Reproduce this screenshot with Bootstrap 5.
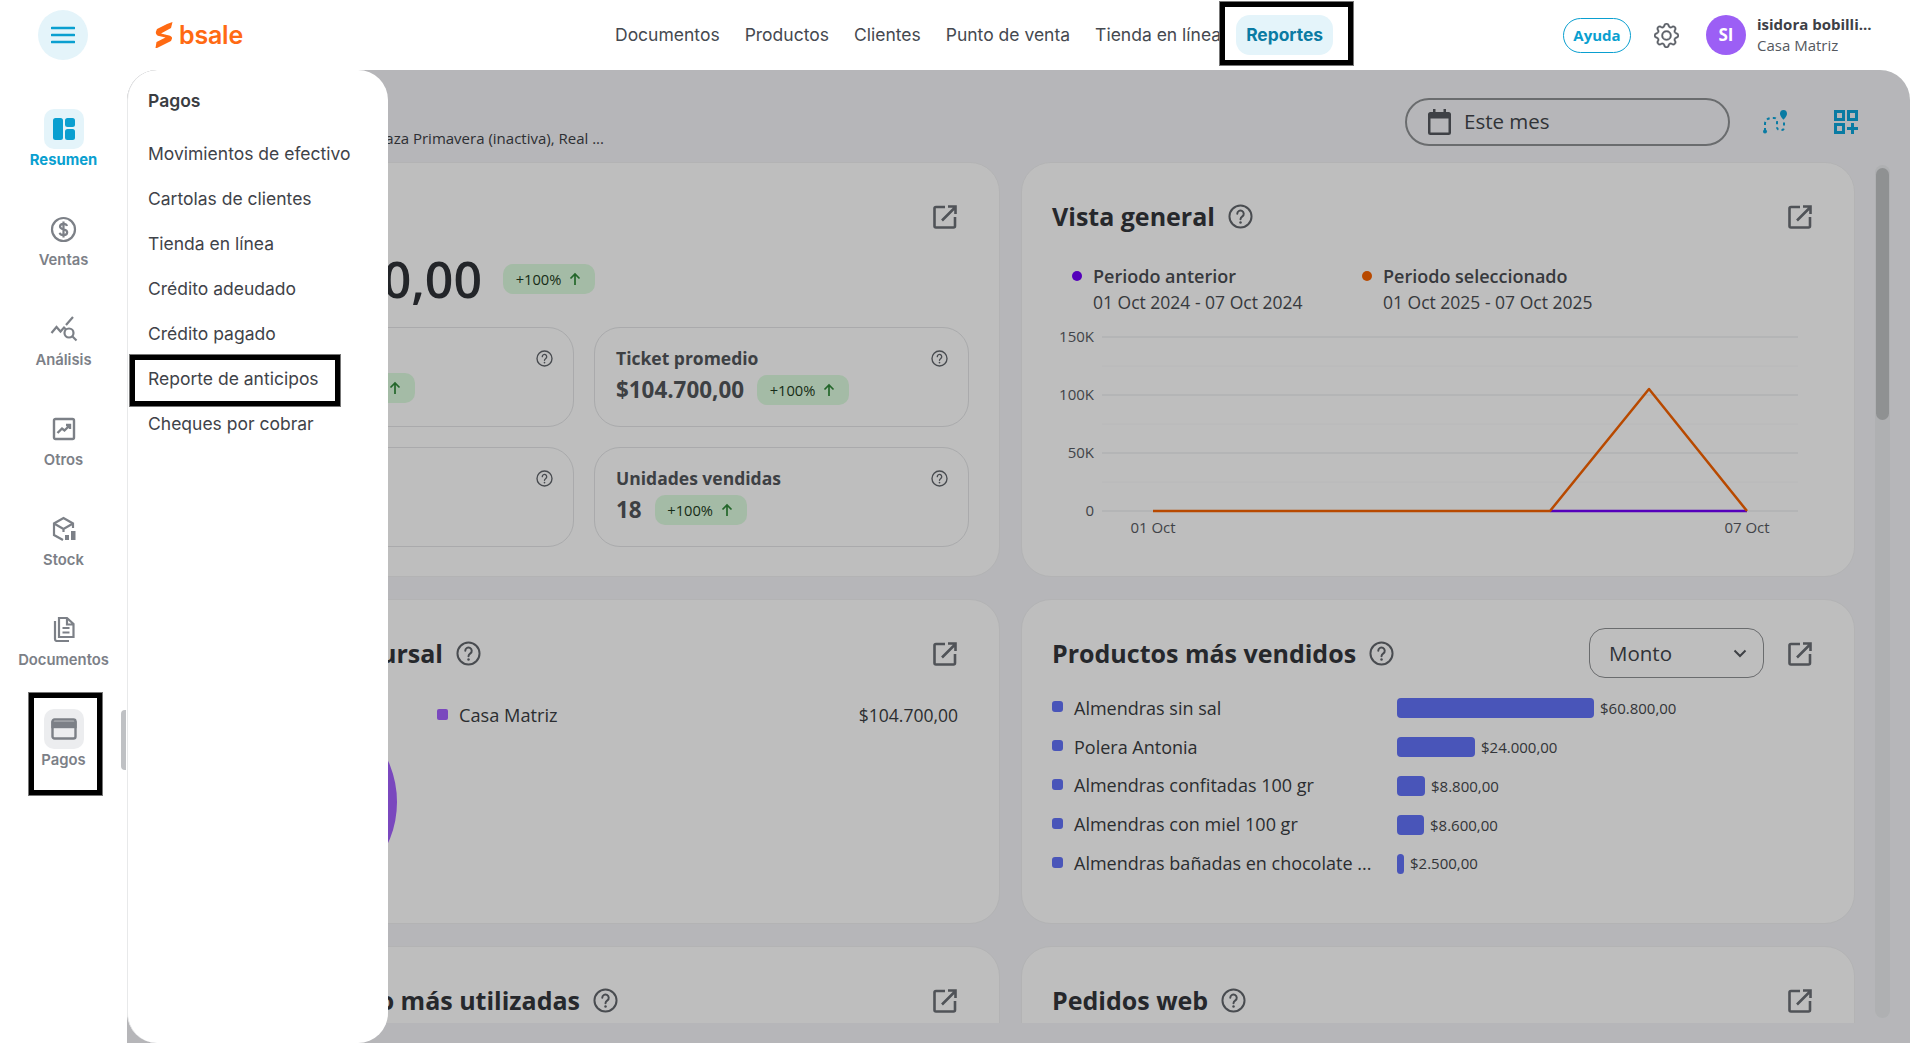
<!DOCTYPE html>
<html lang="es">
<head>
<meta charset="utf-8">
<title>Bsale - Resumen</title>
<link href="https://cdn.jsdelivr.net/npm/bootstrap@5.3.0/dist/css/bootstrap.min.css" rel="stylesheet">
<style>
html,body{height:1043px;overflow:hidden;background:#fff}
body{font-family:"Open Sans","Noto Sans",sans-serif;color:#3d4046}
.topbar{height:70px;padding:0;flex-wrap:nowrap;justify-content:flex-start}
.burger{width:50px;height:50px;margin-left:38px;border-radius:50%;background:#e4f4fa;border:0;padding:0}
.logo{margin-left:67px;width:88px;height:26px;gap:6px}
.logo svg{flex:none}
.logo-word{font-family:Inter,sans-serif;font-weight:600;font-size:25px;line-height:26px;color:#ff6a13;letter-spacing:-.2px}
.mainnav{margin-left:362px;gap:5px;font-family:Inter,sans-serif;flex-wrap:nowrap}
.mainnav .nav-link{color:#454950;font-size:17.5px;padding:0 10px;height:40px;line-height:40px;border-radius:14px;white-space:nowrap;position:relative}
.mainnav .nav-link.on{background:#e4f4fa;color:#0a7ba3;font-weight:700;font-size:17.4px}
.hl{position:absolute;border:5px solid #000;box-shadow:0 0 0 1px #777;pointer-events:none}
.hl-nav{top:-13px;bottom:-10px;left:-16px;right:-20px;border-radius:0}
.ayuda{width:68px;height:35px;border:1px solid #0a9fd0;border-radius:18px;color:#0a9fd0;font:700 15px/33px "Open Sans",sans-serif;padding:0;background:#fff}
.tools{margin-left:auto;padding-right:40px}
.gearbtn{margin-left:23px;width:25px;height:25px;color:#5b5f66;stroke:currentColor;stroke-width:.25}
.avatar{margin-left:27px;width:40px;height:40px;border-radius:50%;background:#9c5ff5;color:#fff;font-weight:700;font-size:17px}
.who{margin-left:11px;width:113px;line-height:21px}
.who b{display:block;font-size:15px;font-weight:700;color:#3d4046;white-space:nowrap}
.who span{display:block;font-size:15px;color:#54585e}
.shell{height:973px}
.sidebar{width:127px;flex:none;position:relative;padding-top:39px;font-family:Inter,sans-serif}
.sideitem{height:100px;color:#7c8087;text-align:center;font-size:14.8px;font-weight:600;line-height:20px;position:relative;text-decoration:none;display:block}
.sideicon{width:40px;height:40px;border-radius:10px;margin:0 auto 1px}
.sideitem.cur{color:#0a9fd0;font-weight:700}
.sideitem.cur .sideicon{background:#e4f4fa}
.sideitem.act .sideicon{background:#ecedef}
.hl-side{left:29px;width:73px;top:-16px;height:102px}
.grip{position:absolute;right:1px;top:640px;width:5px;height:60px;background:#bfc1c4;border-radius:4px 0 0 4px}
.stage{flex:1;position:relative;overflow:hidden;background:#f4f5f8;border-radius:30px 30px 0 0}
.head{height:92px;padding:0 52px 0 39px}
.subnote{font-size:15px;white-space:nowrap;color:#3d4046;margin-top:44px;line-height:20px;width:438px;text-align:right}
.datebox{width:325px;height:48px;margin-left:auto;margin-top:11px;border:2px solid #8f9194;border-radius:24px;padding-left:21px;font-size:20.5px;color:#42454b;gap:13px}
.headicon{color:#0da5db;width:24px;height:24px}
.route{margin-left:33px;margin-top:11px}
.gridadd{margin-left:47px;margin-top:11px}
.lower{height:861px;padding-left:39px}
.viewport{width:1689px;height:861px;overflow:hidden;flex:none}
.panelgrid{display:grid;grid-template-columns:834px 834px;column-gap:21px;row-gap:22px;grid-template-rows:415px 325px 200px}
.panel{border-radius:30px;border:1px solid #f0f0f2;background:#fff;padding:28px 30px 0;box-shadow:none}
.phead{height:50px;display:flex;align-items:center}
.ptitle{font-size:25px;font-weight:700;color:#33363b;margin:0;line-height:32px;white-space:nowrap}
.t-suc{width:246px;text-align:right}
.t-pago{width:383px;text-align:right}
.qicon{width:25px;height:25px;margin-left:13px;color:#62666c;flex:none}
.exticon{width:24px;height:24px;margin:1px 12px 0 auto;color:#6c7076;flex:none}
.bignum{height:60px;margin-top:8px;gap:21px}
.bignum strong{font-size:50px;font-weight:600;color:#2f3238;line-height:60px;white-space:nowrap;width:285px;text-align:right}
.pillup{width:92px;height:30px;border-radius:10px;background:#ddfbdf;color:#1e3b22;font-size:14.7px;gap:7px;flex:none}
.pillup svg{width:14px;height:14px;color:#2f8a39}
.kpis{display:grid;grid-template-columns:375px 375px;gap:20px;margin:18px 0 0 2px}
.kpi{height:100px;border:1px solid #e4e5e7;border-radius:26px;padding:18px 20px 0 21px}
.kpi-top{height:24px;display:flex;align-items:center}
.kpi-top span{font-size:17.5px;font-weight:700;color:#53565b}
.kpi-top svg{width:17px;height:17px;color:#62666c;margin-right:0;margin-left:auto}
.kpi-val{margin-top:3px;gap:13px}
.kpi-val strong{font-size:22.4px;font-weight:700;color:#53565b;white-space:nowrap}
.kpi-val.offset{padding-left:102px}
.legend{margin:23px 0 0 20px}
.legitem{width:290px}
.legdot{width:10px;height:10px;border-radius:50%;margin:7px 11px 0 0;flex:none}
.legname{font-size:18px;font-weight:600;line-height:24px;color:#4a4d52;white-space:nowrap}
.legdate{font-size:17.5px;line-height:24px;margin-top:2px;color:#4a4d52;white-space:nowrap}
.chart{display:block;margin:10px 0 0 -30px}
.chart text{font-family:"Open Sans",sans-serif;font-size:15px;fill:#585b62}
.sucbody{padding-top:24px}
.donutcol{width:240px;flex:none}
.sucrow{height:26px;line-height:26px;font-size:18.2px;padding-right:11px;color:#3a3d42}
.sucrow .amt{font-size:17.5px}
.sq{width:11px;height:11px;border-radius:2px;background:#a461ff;margin:0 11px 2px 0;flex:none}
.selectbox{width:175px;height:50px;margin-left:auto;border:1px solid #8f9194;border-radius:16px;padding:0 16px 0 19px;font-size:20.5px;color:#42454b;background:transparent}
.selectbox+.exticon{margin-left:24px}
.prodlist{margin-top:11px}
.prodrow{height:38.8px;display:flex;align-items:center;font-size:18px;color:#3a3d42}
.prodname{width:345px;flex:none;display:flex;align-items:center;white-space:nowrap}
.bul{width:11px;height:11px;border-radius:3px;background:#6372f8;margin:0 11px 3px 0;flex:none}
.prodbar{height:20px;border-radius:4px;background:#6372f8}
.prodval{font-size:15px;margin-left:6px;color:#45484d}
.sbar{width:15px;margin:3px 0 5px 20px;height:853px;background:#ebecef;border-radius:8px;padding:3px 1px 0;flex:none}
.sthumb{height:252px;border-radius:7px;background:#c1c3c5}
.dim{position:absolute;inset:0;background:rgba(0,0,0,.255)}
.flyout{position:absolute;left:0;top:0;bottom:0;width:261px;background:#fff;border-left:1px solid #e8e9ea;border-radius:30px;padding:16px 0 0 20px;font-family:Inter,sans-serif}
.flyout h6{font-size:17.5px;font-weight:600;color:#3a3d42;line-height:30px;margin:0 0 15px}
.flyout .list-group-item{border:0;padding:0;height:45px;line-height:45px;font-size:17.5px;color:#3f4349;background:transparent;position:relative;white-space:nowrap}
.hl-rep{left:-18px;width:210px;top:-1px;height:51px}
</style>
</head>
<body>
<svg width="0" height="0" class="position-absolute">
  <symbol id="q" viewBox="0 0 24 24"><circle cx="12" cy="12" r="10.6" fill="none" stroke="currentColor" stroke-width="1.9"/><path d="M8.9 9.4a3.1 3.1 0 1 1 4.9 2.5c-1.1.8-1.8 1.4-1.8 2.7" fill="none" stroke="currentColor" stroke-width="1.9" stroke-linecap="round"/><circle cx="12" cy="17.7" r="1.2" fill="currentColor"/></symbol>
  <symbol id="ext" viewBox="0 0 24 24"><path d="M12 2H3a1.500 1.500 0 0 0-1.500 1.500v17.500A1.500 1.500 0 0 0 3 22.500h17.500A1.500 1.500 0 0 0 22 21v-9" fill="none" stroke="currentColor" stroke-width="2.600"/><path d="M9 15.500L22 2.500M15 1.500h7.500V9" fill="none" stroke="currentColor" stroke-width="2.600"/></symbol>
  <symbol id="up" viewBox="0 0 14 14"><path d="M7 13V2M2.500 6.500L7 2l4.500 4.500" fill="none" stroke="currentColor" stroke-width="1.700"/></symbol>
</svg>

<nav class="navbar topbar bg-white d-flex align-items-center">
  <button class="burger d-flex align-items-center justify-content-center" type="button" aria-label="Menú">
    <svg width="24" height="18" viewBox="0 0 24 18"><path d="M1 2h22M1 9h22M1 16h22" stroke="#0a9fd0" stroke-width="2.600" stroke-linecap="round"/></svg>
  </button>
  <a class="logo d-flex align-items-center text-decoration-none" href="#">
    <svg width="18" height="26" viewBox="0 0 18 26"><path fill="#ff6a13" d="M17.500 0L16 6 6 11.500l6 1.500c3 .5 5.500 1.500 5 3.500L16 19 2 26H.500l1-6 9-4.500L4 14c-3-.8-3.500-3-3-4.500L2 7l10-5z"/></svg>
    <span class="logo-word">bsale</span>
  </a>
  <ul class="nav mainnav">
    <li class="nav-item"><a class="nav-link" href="#">Documentos</a></li>
    <li class="nav-item"><a class="nav-link" href="#">Productos</a></li>
    <li class="nav-item"><a class="nav-link" href="#">Clientes</a></li>
    <li class="nav-item"><a class="nav-link" href="#">Punto de venta</a></li>
    <li class="nav-item"><a class="nav-link" href="#">Tienda en línea</a></li>
    <li class="nav-item"><a class="nav-link on" href="#">Reportes<span class="hl hl-nav"></span></a></li>
  </ul>
  <div class="tools d-flex align-items-center">
    <button class="ayuda" type="button">Ayuda</button>
    <svg class="gearbtn" viewBox="0 0 16 16" fill="currentColor"><path d="M8 4.754a3.246 3.246 0 1 0 0 6.492 3.246 3.246 0 0 0 0-6.492zM5.754 8a2.246 2.246 0 1 1 4.492 0 2.246 2.246 0 0 1-4.492 0z"/><path d="M9.796 1.343c-.527-1.790-3.065-1.790-3.592 0l-.094.319a.873.873 0 0 1-1.255.520l-.292-.160c-1.640-.892-3.433.902-2.540 2.541l.159.292a.873.873 0 0 1-.520 1.255l-.319.094c-1.790.527-1.790 3.065 0 3.592l.319.094a.873.873 0 0 1 .520 1.255l-.160.292c-.892 1.640.901 3.434 2.541 2.540l.292-.159a.873.873 0 0 1 1.255.520l.094.319c.527 1.790 3.065 1.790 3.592 0l.094-.319a.873.873 0 0 1 1.255-.520l.292.160c1.640.893 3.434-.902 2.540-2.541l-.159-.292a.873.873 0 0 1 .520-1.255l.319-.094c1.790-.527 1.790-3.065 0-3.592l-.319-.094a.873.873 0 0 1-.520-1.255l.160-.292c.893-1.640-.902-3.433-2.541-2.540l-.292.159a.873.873 0 0 1-1.255-.520l-.094-.319zm-2.633.283c.246-.835 1.428-.835 1.674 0l.094.319a1.873 1.873 0 0 0 2.693 1.115l.291-.160c.764-.415 1.600.420 1.184 1.185l-.159.292a1.873 1.873 0 0 0 1.116 2.692l.318.094c.835.246.835 1.428 0 1.674l-.319.094a1.873 1.873 0 0 0-1.115 2.693l.160.291c.415.764-.420 1.600-1.185 1.184l-.291-.159a1.873 1.873 0 0 0-2.693 1.116l-.094.318c-.246.835-1.428.835-1.674 0l-.094-.319a1.873 1.873 0 0 0-2.692-1.115l-.292.160c-.764.415-1.600-.420-1.184-1.185l.159-.291A1.873 1.873 0 0 0 1.945 8.930l-.319-.094c-.835-.246-.835-1.428 0-1.674l.319-.094A1.873 1.873 0 0 0 3.060 4.377l-.160-.292c-.415-.764.420-1.600 1.185-1.184l.292.159a1.873 1.873 0 0 0 2.692-1.115l.094-.319z"/></svg>
    <div class="avatar d-flex align-items-center justify-content-center">SI</div>
    <div class="who"><b>isidora bobilli...</b><span>Casa Matriz</span></div>
  </div>
</nav>

<div class="shell d-flex">
  <aside class="sidebar">
    <a class="sideitem cur" href="#"><div class="sideicon d-flex align-items-center justify-content-center"><svg width="24" height="24" viewBox="0 0 24 24" fill="#0a9fd0"><rect x="1" y="1" width="10" height="22" rx="2.500"/><rect x="13" y="1" width="10" height="9" rx="2.500"/><rect x="13" y="12" width="10" height="11" rx="2.500"/></svg></div>Resumen</a>
    <a class="sideitem" href="#"><div class="sideicon d-flex align-items-center justify-content-center"><svg width="27" height="27" viewBox="0 0 27 27" fill="none" stroke="#7c8087" stroke-width="2.200"><circle cx="13.500" cy="13.500" r="11.500"/><path d="M17 10c-.4-1.500-1.800-2.200-3.500-2.200-2 0-3.500 1-3.500 2.700 0 3.800 7.200 2 7.200 5.800 0 1.800-1.600 2.900-3.700 2.900-1.900 0-3.400-.9-3.800-2.500M13.500 5.500v16"/></svg></div>Ventas</a>
    <a class="sideitem" href="#"><div class="sideicon d-flex align-items-center justify-content-center"><svg width="28" height="26" viewBox="0 0 28 26" fill="none" stroke="#7c8087" stroke-width="2.200"><path d="M1.500 17l5-6 4 4.500 3.500-4 2 2M16 9l7-8"/><circle cx="19" cy="17" r="4.500"/><path d="M22.500 20.500l4 4"/></svg></div>Análisis</a>
    <a class="sideitem" href="#"><div class="sideicon d-flex align-items-center justify-content-center"><svg width="24" height="24" viewBox="0 0 24 24" fill="none" stroke="#7c8087" stroke-width="2.400"><rect x="2" y="2" width="20" height="20" rx="1.500"/><path d="M5.500 16l4.500-4.500 2.500 2 5-5M14 8h4v4"/></svg></div>Otros</a>
    <a class="sideitem" href="#"><div class="sideicon d-flex align-items-center justify-content-center"><svg width="26" height="26" viewBox="0 0 26 26" fill="none" stroke="#7c8087" stroke-width="2.200"><path d="M12 24l-9-5V7.500L12.500 2 22 7.500V12M3 7.500l9.500 5.500L22 7.500M12.500 13v3"/><rect x="14" y="19" width="4" height="5" fill="#7c8087" stroke="none"/><rect x="20" y="15" width="4.500" height="9" fill="#7c8087" stroke="none"/></svg></div>Stock</a>
    <a class="sideitem" href="#"><div class="sideicon d-flex align-items-center justify-content-center"><svg width="24" height="26" viewBox="0 0 24 26" fill="none" stroke="#7c8087" stroke-width="2.200"><path d="M3 5v18a2 2 0 0 0 2 2h12"/><path d="M7 2v19h14.500V8L15 2zM15 2v6.500h6.500M10.500 12h7M10.500 16.500h7"/></svg></div>Documentos</a>
    <a class="sideitem act" href="#"><div class="sideicon d-flex align-items-center justify-content-center"><svg width="26" height="22" viewBox="0 0 26 22" fill="none" stroke="#7c8087" stroke-width="2.400"><rect x="1.500" y="1.500" width="23" height="19" rx="2"/><rect x="1.500" y="4.500" width="23" height="4.500" fill="#7c8087"/></svg></div>Pagos<span class="hl hl-side"></span></a>
    <div class="grip"></div>
  </aside>

  <main class="stage">
    <div class="head d-flex align-items-center">
      <div class="subnote">aza Primavera (inactiva), Real ...</div>
      <div class="datebox d-flex align-items-center">
        <svg width="23" height="26" viewBox="0 0 23 26"><path fill="#55585e" d="M5 0h2.500v3h8V0H18v3h2.500A2.500 2.500 0 0 1 23 5.500v18a2.500 2.500 0 0 1-2.500 2.500h-18A2.500 2.500 0 0 1 0 23.500v-18A2.500 2.500 0 0 1 2.500 3H5zM2.500 9.500v14h18v-14z"/></svg>
        <span>Este mes</span>
      </div>
      <svg class="headicon route" viewBox="0 0 24 24" fill="none" stroke="currentColor" stroke-width="2" stroke-dasharray="3 3"><path d="M2 21v-7q0-5 6-6h3q3 0 3 4v5q0 3 3 3h2q2 0 2-3v-5"/><circle cx="2" cy="21.500" r="2" fill="currentColor" stroke="none"/><path d="M20.500 0a3.800 3.800 0 0 1 3.500 3.800c0 2.500-3.500 6-3.500 6S17 6.300 17 3.800A3.800 3.800 0 0 1 20.500 0z" fill="currentColor" stroke="none"/></svg>
      <svg class="headicon gridadd" viewBox="0 0 24 24" fill="none" stroke="currentColor" stroke-width="3"><rect x="1.500" y="1.500" width="8" height="8"/><rect x="14.500" y="1.500" width="8" height="8"/><rect x="1.500" y="14.500" width="8" height="8"/><path d="M18.500 13v11M13 18.500h11"/></svg>
    </div>

    <div class="lower d-flex">
      <div class="viewport">
        <div class="panelgrid">
          <section class="card panel">
            <div class="phead"><svg class="exticon"><use href="#ext"/></svg></div>
            <div class="bignum d-flex align-items-center"><strong>0,00</strong><span class="pillup d-flex align-items-center justify-content-center">+100% <svg><use href="#up"/></svg></span></div>
            <div class="kpis">
              <div class="kpi"><div class="kpi-top"><svg><use href="#q"/></svg></div><div class="kpi-val offset d-flex align-items-center"><span class="pillup d-flex align-items-center justify-content-center">+100% <svg><use href="#up"/></svg></span></div></div>
              <div class="kpi"><div class="kpi-top"><span>Ticket promedio</span><svg><use href="#q"/></svg></div><div class="kpi-val d-flex align-items-center"><strong>$104.700,00</strong><span class="pillup d-flex align-items-center justify-content-center">+100% <svg><use href="#up"/></svg></span></div></div>
              <div class="kpi"><div class="kpi-top"><svg><use href="#q"/></svg></div></div>
              <div class="kpi"><div class="kpi-top"><span>Unidades vendidas</span><svg><use href="#q"/></svg></div><div class="kpi-val d-flex align-items-center"><strong>18</strong><span class="pillup d-flex align-items-center justify-content-center">+100% <svg><use href="#up"/></svg></span></div></div>
            </div>
          </section>

          <section class="card panel">
            <div class="phead"><h2 class="ptitle">Vista general</h2><svg class="qicon"><use href="#q"/></svg><svg class="exticon"><use href="#ext"/></svg></div>
            <div class="legend d-flex">
              <div class="legitem d-flex"><span class="legdot" style="background:#7200fb"></span><div><div class="legname">Periodo anterior</div><div class="legdate">01 Oct 2024 - 07 Oct 2024</div></div></div>
              <div class="legitem d-flex"><span class="legdot" style="background:#f76300"></span><div><div class="legname">Periodo seleccionado</div><div class="legdate">01 Oct 2025 - 07 Oct 2025</div></div></div>
            </div>
            <svg class="chart" width="832" height="230" viewBox="1022 325 832 230">
              <path d="M1102 367H1798M1102 425H1798M1102 483H1798" stroke="#f8f8f9" stroke-width="1" fill="none"/>
              <path d="M1102 338H1798M1102 396H1798M1102 454H1798M1102 512H1798" stroke="#eef0f2" stroke-width="1.500" fill="none"/>
              <path d="M1550 512H1747" stroke="#7200fb" stroke-width="2.500" fill="none"/>
              <path d="M1153 512H1550L1649 390L1747 512" stroke="#f76300" stroke-width="2.500" fill="none" stroke-linejoin="round"/>
              <g text-anchor="end"><text x="1094" y="343">150K</text><text x="1094" y="401">100K</text><text x="1094" y="459">50K</text><text x="1094" y="517">0</text></g>
              <g text-anchor="middle"><text x="1153" y="534">01 Oct</text><text x="1747" y="534">07 Oct</text></g>
            </svg>
          </section>

          <section class="card panel">
            <div class="phead"><h2 class="ptitle t-suc">ursal</h2><svg class="qicon"><use href="#q"/></svg><svg class="exticon"><use href="#ext"/></svg></div>
            <div class="sucbody d-flex">
              <div class="donutcol"><svg width="200" height="200" viewBox="0 0 200 200"><circle cx="100" cy="100" r="82" fill="none" stroke="#a461ff" stroke-width="36"/></svg></div>
              <div class="flex-grow-1"><div class="sucrow d-flex align-items-center"><span class="sq"></span><span>Casa Matriz</span><span class="ms-auto amt">$104.700,00</span></div></div>
            </div>
          </section>

          <section class="card panel">
            <div class="phead"><h2 class="ptitle">Productos más vendidos</h2><svg class="qicon"><use href="#q"/></svg>
              <div class="selectbox d-flex align-items-center justify-content-between"><span>Monto</span><svg width="14" height="9" viewBox="0 0 14 9"><path d="M1.500 1.500L7 7l5.500-5.500" fill="none" stroke="#55585e" stroke-width="2"/></svg></div>
              <svg class="exticon"><use href="#ext"/></svg></div>
            <div class="prodlist">
              <div class="prodrow"><span class="prodname"><span class="bul"></span>Almendras sin sal</span><span class="prodbar" style="width:197px"></span><span class="prodval">$60.800,00</span></div>
              <div class="prodrow"><span class="prodname"><span class="bul"></span>Polera Antonia</span><span class="prodbar" style="width:78px"></span><span class="prodval">$24.000,00</span></div>
              <div class="prodrow"><span class="prodname"><span class="bul"></span>Almendras confitadas 100 gr</span><span class="prodbar" style="width:28px"></span><span class="prodval">$8.800,00</span></div>
              <div class="prodrow"><span class="prodname"><span class="bul"></span>Almendras con miel 100 gr</span><span class="prodbar" style="width:27px"></span><span class="prodval">$8.600,00</span></div>
              <div class="prodrow"><span class="prodname"><span class="bul"></span>Almendras bañadas en chocolate ...</span><span class="prodbar" style="width:7px"></span><span class="prodval">$2.500,00</span></div>
            </div>
          </section>

          <section class="card panel">
            <div class="phead"><h2 class="ptitle t-pago">o más utilizadas</h2><svg class="qicon"><use href="#q"/></svg><svg class="exticon"><use href="#ext"/></svg></div>
          </section>
          <section class="card panel">
            <div class="phead"><h2 class="ptitle">Pedidos web</h2><svg class="qicon"><use href="#q"/></svg><svg class="exticon"><use href="#ext"/></svg></div>
          </section>
        </div>
      </div>
      <div class="sbar"><div class="sthumb"></div></div>
    </div>

    <div class="dim"></div>
    <div class="flyout">
      <h6>Pagos</h6>
      <div class="list-group list-group-flush">
        <a class="list-group-item" href="#">Movimientos de efectivo</a>
        <a class="list-group-item" href="#">Cartolas de clientes</a>
        <a class="list-group-item" href="#">Tienda en línea</a>
        <a class="list-group-item" href="#">Crédito adeudado</a>
        <a class="list-group-item" href="#">Crédito pagado</a>
        <a class="list-group-item" href="#">Reporte de anticipos<span class="hl hl-rep"></span></a>
        <a class="list-group-item" href="#">Cheques por cobrar</a>
      </div>
    </div>
  </main>
</div>
<script src="https://cdn.jsdelivr.net/npm/bootstrap@5.3.0/dist/js/bootstrap.bundle.min.js"></script>
</body>
</html>
